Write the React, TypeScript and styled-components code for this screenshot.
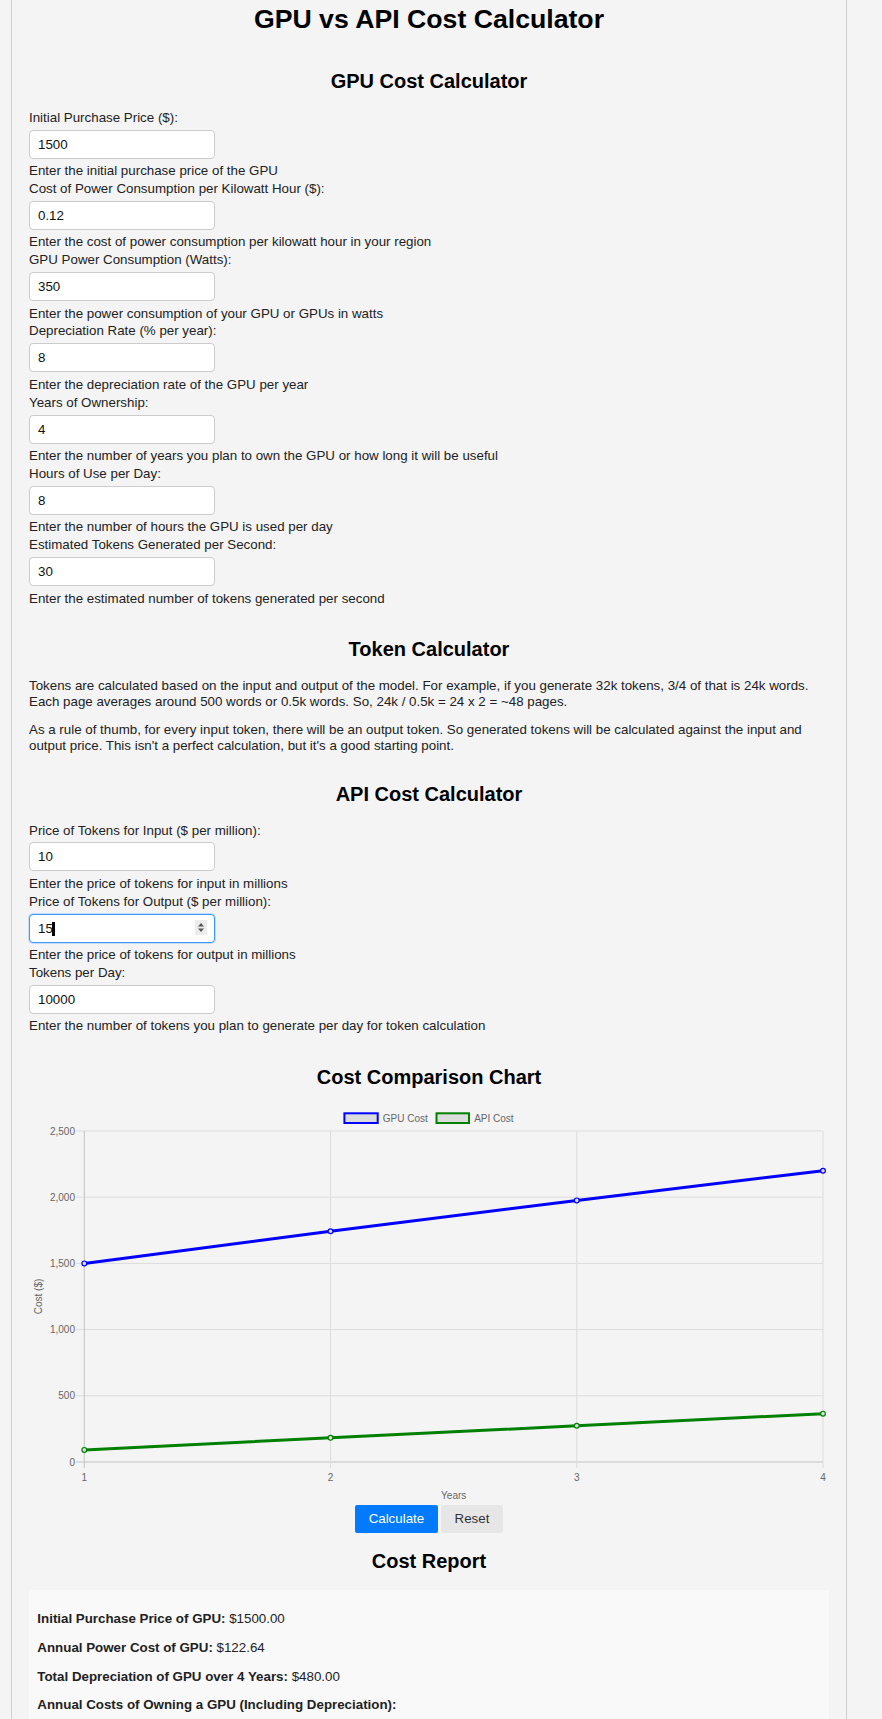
import React from "react";
import styled, { createGlobalStyle } from "styled-components";

const GlobalStyle = createGlobalStyle`
  html, body {
    margin: 0;
    padding: 0;
    background: #f4f4f4;
  }
  body {
    font-family: "Liberation Sans", Arial, Helvetica, sans-serif;
    font-size: 13.33px;
    line-height: 15.33px;
    color: #222;
  }
  * { box-sizing: border-box; }
`;

const Page = styled.div`
  box-sizing: content-box;
  margin-left: 11px;
  width: 800px;
  padding: 4px 17px 40px;
  border-left: 1px solid #cfcfcf;
  border-right: 1px solid #cfcfcf;
  background: #f4f4f4;
`;

const Title = styled.h1`
  margin: 0;
  font-size: 26.67px;
  line-height: 30.67px;
  font-weight: bold;
  text-align: center;
  color: #000;
`;

const SectionTitle = styled.h2<{ $mt: number; $mb?: number }>`
  margin: ${(p) => p.$mt}px 0 ${(p) => (p.$mb ?? 17)}px;
  font-size: 20px;
  line-height: 23px;
  font-weight: bold;
  text-align: center;
  color: #000;
`;

const Field = styled.div`
  margin-bottom: 2.6px;
`;

const Label = styled.label`
  display: block;
  line-height: 15.33px;
`;

const InputWrap = styled.div`
  position: relative;
  width: 186px;
  margin: 4.5px 0;
`;

const NumberInput = styled.input<{ $focused?: boolean }>`
  display: block;
  width: 186px;
  height: 29px;
  padding: 0 8px;
  border: 1px solid ${(p) => (p.$focused ? "#3b99fc" : "#cccccc")};
  border-radius: 4px;
  background: #fff;
  font-family: inherit;
  font-size: 13.33px;
  color: #111;
  outline: none;
  box-shadow: ${(p) => (p.$focused ? "0 0 0 1px rgba(59,153,252,0.25)" : "none")};
`;

const Spinner = styled.span`
  position: absolute;
  top: 6px;
  right: 8px;
  width: 12px;
  height: 15px;
  background: #ececec;
  display: flex;
  align-items: center;
  justify-content: center;
`;

const Caret = styled.span`
  position: absolute;
  left: 22.5px;
  top: 8px;
  width: 3px;
  height: 14px;
  background: #000;
`;

const Hint = styled.div`
  line-height: 15.33px;
`;

const Paragraph = styled.p`
  margin: 0 0 13.33px;
  line-height: 15.33px;
`;

const TokenText = styled.div`
  margin-top: 17.8px;
`;

const ChartBox = styled.div`
  width: 800px;
  height: 403px;
`;

const ButtonRow = styled.div`
  margin-top: 2px;
  display: flex;
  justify-content: center;
  gap: 3.7px;
`;

const Button = styled.button<{ $primary?: boolean }>`
  height: 28.67px;
  padding: 0 13.33px;
  border: none;
  border-radius: 2px;
  font-family: inherit;
  font-size: 13.33px;
  line-height: 15.33px;
  background: ${(p) => (p.$primary ? "#007bff" : "#e6e6e6")};
  color: ${(p) => (p.$primary ? "#fff" : "#333")};
  cursor: pointer;
`;

const ReportBox = styled.div`
  background: #f9f9f9;
  padding: 8.33px;
`;

const ReportLine = styled.p`
  margin: 13.33px 0;
  line-height: 15.33px;
  color: #222;
`;

type FieldDef = { label: string; value: string; hint: string; focused?: boolean };

const gpuFields: FieldDef[] = [
  { label: "Initial Purchase Price ($):", value: "1500", hint: "Enter the initial purchase price of the GPU" },
  { label: "Cost of Power Consumption per Kilowatt Hour ($):", value: "0.12", hint: "Enter the cost of power consumption per kilowatt hour in your region" },
  { label: "GPU Power Consumption (Watts):", value: "350", hint: "Enter the power consumption of your GPU or GPUs in watts" },
  { label: "Depreciation Rate (% per year):", value: "8", hint: "Enter the depreciation rate of the GPU per year" },
  { label: "Years of Ownership:", value: "4", hint: "Enter the number of years you plan to own the GPU or how long it will be useful" },
  { label: "Hours of Use per Day:", value: "8", hint: "Enter the number of hours the GPU is used per day" },
  { label: "Estimated Tokens Generated per Second:", value: "30", hint: "Enter the estimated number of tokens generated per second" },
];

const apiFields: FieldDef[] = [
  { label: "Price of Tokens for Input ($ per million):", value: "10", hint: "Enter the price of tokens for input in millions" },
  { label: "Price of Tokens for Output ($ per million):", value: "15", hint: "Enter the price of tokens for output in millions", focused: true },
  { label: "Tokens per Day:", value: "10000", hint: "Enter the number of tokens you plan to generate per day for token calculation" },
];

function InputField({ f, id }: { f: FieldDef; id: string }) {
  return (
    <Field>
      <Label htmlFor={id}>{f.label}</Label>
      <InputWrap>
        <NumberInput id={id} type="text" defaultValue={f.value} $focused={f.focused} />
        {f.focused && (
          <>
            <Caret />
            <Spinner>
              <svg width="8" height="11" viewBox="0 0 8 11">
                <path d="M4 1 L7 4.5 H1 Z" fill="#555" />
                <path d="M4 10 L7 6.5 H1 Z" fill="#555" />
              </svg>
            </Spinner>
          </>
        )}
      </InputWrap>
      <Hint>{f.hint}</Hint>
    </Field>
  );
}

const X0 = 55.3;
const X1 = 794;
const YT = 31;
const YB = 362;
const gpuData = [1500, 1742.64, 1975.68, 2199.9];
const apiData = [91.25, 182.5, 273.75, 365];
const xAt = (i: number) => X0 + (i * (X1 - X0)) / 3;
const yAt = (v: number) => YB - (v / 2500) * (YB - YT);

function CostChart() {
  const ticks = [0, 500, 1000, 1500, 2000, 2500];
  const grid = "#dcdcdc";
  const axis = "#c2c2c2";
  const tickFont = { fontFamily: "'Liberation Sans', Arial, sans-serif", fontSize: 10, fill: "#666" };
  const series = [
    { data: gpuData, color: "#0000ff" },
    { data: apiData, color: "#008000" },
  ];
  return (
    <svg width="800" height="403" viewBox="0 0 800 403">
      <rect x="315.4" y="13.3" width="33.3" height="9.7" fill="#dcdcdc" stroke="#0000ff" strokeWidth="2" />
      <text x="353.8" y="21.6" {...tickFont}>GPU Cost</text>
      <rect x="407.5" y="13.3" width="32.5" height="9.7" fill="#dcdcdc" stroke="#008000" strokeWidth="2" />
      <text x="445.2" y="21.6" {...tickFont}>API Cost</text>

      {ticks.map((t) => (
        <g key={t}>
          <line x1="47" x2={X1} y1={yAt(t)} y2={yAt(t)} stroke={t === 0 ? axis : grid} strokeWidth="1" />
          <text x="46" y={yAt(t) + 3.5} textAnchor="end" {...tickFont}>
            {t.toLocaleString("en-US")}
          </text>
        </g>
      ))}
      {[0, 1, 2, 3].map((i) => (
        <g key={i}>
          <line x1={xAt(i)} x2={xAt(i)} y1={YT} y2={YB + 6} stroke={i === 0 ? axis : grid} strokeWidth="1" />
          <text x={xAt(i)} y="381" textAnchor="middle" {...tickFont}>
            {i + 1}
          </text>
        </g>
      ))}
      <text x="424.7" y="398.5" textAnchor="middle" {...tickFont}>Years</text>
      <text transform="translate(12.6,196.5) rotate(-90)" textAnchor="middle" {...tickFont}>Cost ($)</text>

      {series.map((s) => (
        <g key={s.color}>
          <polyline
            points={s.data.map((v, i) => `${xAt(i)},${yAt(v)}`).join(" ")}
            fill="none"
            stroke={s.color}
            strokeWidth="3"
          />
          {s.data.map((v, i) => (
            <circle key={i} cx={xAt(i)} cy={yAt(v)} r="2.4" fill="#dcdcdc" stroke={s.color} strokeWidth="1.2" />
          ))}
        </g>
      ))}
    </svg>
  );
}

export default function App() {
  return (
    <>
      <GlobalStyle />
      <Page>
        <Title>GPU vs API Cost Calculator</Title>

        <SectionTitle $mt={35}>GPU Cost Calculator</SectionTitle>
        {gpuFields.map((f, i) => (
          <InputField key={f.label} f={f} id={`gpu-${i}`} />
        ))}

        <SectionTitle $mt={31.8} $mb={0}>Token Calculator</SectionTitle>
        <TokenText>
          <Paragraph>
            Tokens are calculated based on the input and output of the model. For example, if you generate 32k tokens, 3/4 of that is 24k words. Each page averages around 500 words or 0.5k words. So, 24k / 0.5k = 24 x 2 = ~48 pages.
          </Paragraph>
          <Paragraph>
            As a rule of thumb, for every input token, there will be an output token. So generated tokens will be calculated against the input and output price. This isn't a perfect calculation, but it's a good starting point.
          </Paragraph>
        </TokenText>

        <SectionTitle $mt={29.5}>API Cost Calculator</SectionTitle>
        {apiFields.map((f, i) => (
          <InputField key={f.label} f={f} id={`api-${i}`} />
        ))}

        <SectionTitle $mt={31.8} $mb={11.3}>Cost Comparison Chart</SectionTitle>
        <ChartBox>
          <CostChart />
        </ChartBox>

        <ButtonRow>
          <Button $primary>Calculate</Button>
          <Button>Reset</Button>
        </ButtonRow>

        <SectionTitle $mt={16.7} $mb={16.6}>Cost Report</SectionTitle>
        <ReportBox>
          <ReportLine><strong>Initial Purchase Price of GPU:</strong> $1500.00</ReportLine>
          <ReportLine><strong>Annual Power Cost of GPU:</strong> $122.64</ReportLine>
          <ReportLine><strong>Total Depreciation of GPU over 4 Years:</strong> $480.00</ReportLine>
          <ReportLine><strong>Annual Costs of Owning a GPU (Including Depreciation):</strong></ReportLine>
        </ReportBox>
      </Page>
    </>
  );
}
